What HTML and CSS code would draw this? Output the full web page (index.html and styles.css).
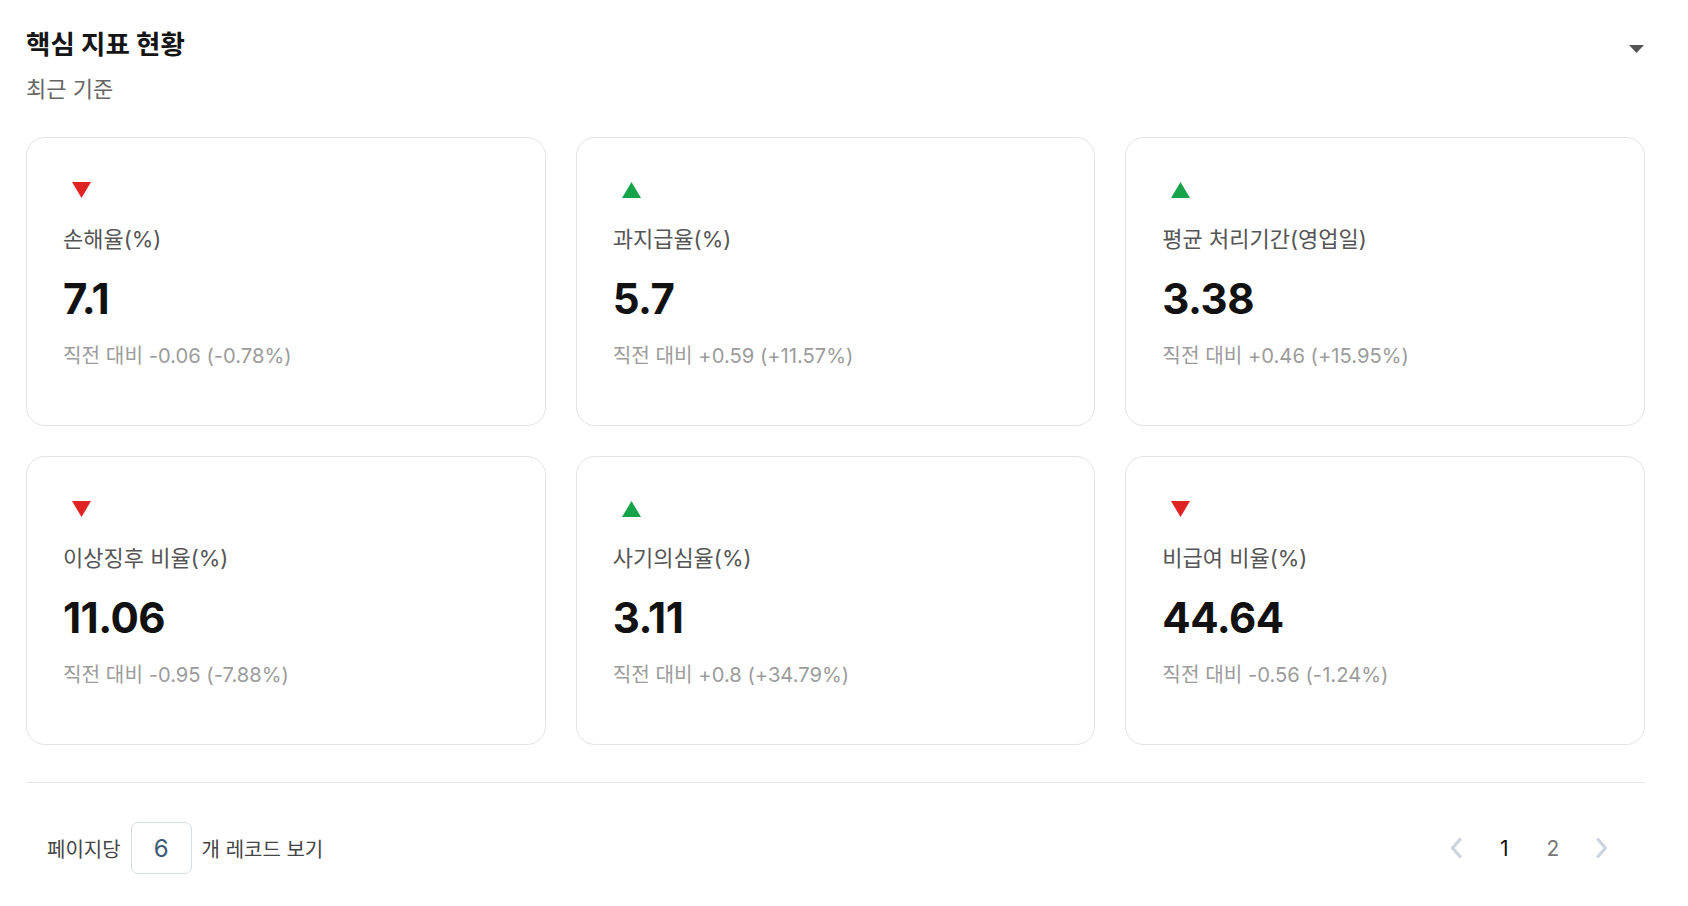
FILE: index.html
```html
<!DOCTYPE html>
<html lang="ko">
<head>
<meta charset="utf-8">
<title>핵심 지표 현황</title>
<link rel="stylesheet" href="styles.css">
</head>
<body>
<section class="panel">
  <div class="header">
    <div class="heading">
      <h1 class="title">핵심 지표 현황</h1>
      <p class="subtitle">최근 기준</p>
    </div>
    <svg class="caret" width="15" height="8" viewBox="0 0 15 8"><path d="M0 0 H15 L7.5 8 Z" fill="#555"/></svg>
  </div>

  <div class="cards">
    <div class="card">
      <div class="trend"><svg width="19" height="16" viewBox="0 0 19 16"><path d="M0 0 H19 L9.5 16 Z" fill="#e02424"/></svg></div>
      <div class="label">손해율(%)</div>
      <div class="value">7.1</div>
      <div class="delta">직전 대비 -0.06 (-0.78%)</div>
    </div>
    <div class="card">
      <div class="trend"><svg width="19" height="16" viewBox="0 0 19 16"><path d="M9.5 0 L19 16 H0 Z" fill="#16a34a"/></svg></div>
      <div class="label">과지급율(%)</div>
      <div class="value">5.7</div>
      <div class="delta">직전 대비 +0.59 (+11.57%)</div>
    </div>
    <div class="card">
      <div class="trend"><svg width="19" height="16" viewBox="0 0 19 16"><path d="M9.5 0 L19 16 H0 Z" fill="#16a34a"/></svg></div>
      <div class="label">평균 처리기간(영업일)</div>
      <div class="value">3.38</div>
      <div class="delta">직전 대비 +0.46 (+15.95%)</div>
    </div>
    <div class="card">
      <div class="trend"><svg width="19" height="16" viewBox="0 0 19 16"><path d="M0 0 H19 L9.5 16 Z" fill="#e02424"/></svg></div>
      <div class="label">이상징후 비율(%)</div>
      <div class="value">11.06</div>
      <div class="delta">직전 대비 -0.95 (-7.88%)</div>
    </div>
    <div class="card">
      <div class="trend"><svg width="19" height="16" viewBox="0 0 19 16"><path d="M9.5 0 L19 16 H0 Z" fill="#16a34a"/></svg></div>
      <div class="label">사기의심율(%)</div>
      <div class="value">3.11</div>
      <div class="delta">직전 대비 +0.8 (+34.79%)</div>
    </div>
    <div class="card">
      <div class="trend"><svg width="19" height="16" viewBox="0 0 19 16"><path d="M0 0 H19 L9.5 16 Z" fill="#e02424"/></svg></div>
      <div class="label">비급여 비율(%)</div>
      <div class="value">44.64</div>
      <div class="delta">직전 대비 -0.56 (-1.24%)</div>
    </div>
  </div>

  <div class="footer">
    <div class="per-page">
      <span>페이지당</span>
      <span class="page-size">6</span>
      <span>개 레코드 보기</span>
    </div>
    <nav class="pager">
      <span class="pg-item"><svg width="14" height="22" viewBox="0 0 14 22"><path d="M11 2.5 L3.5 11 L11 19.5" fill="none" stroke="#cdd3de" stroke-width="3.2" stroke-linecap="round" stroke-linejoin="round"/></svg></span>
      <span class="pg-item current">1</span>
      <span class="pg-item">2</span>
      <span class="pg-item"><svg width="14" height="22" viewBox="0 0 14 22"><path d="M3 2.5 L10.5 11 L3 19.5" fill="none" stroke="#cdd3de" stroke-width="3.2" stroke-linecap="round" stroke-linejoin="round"/></svg></span>
    </nav>
  </div>
</section>
</body>
</html>
```

FILE: styles.css
```css
* { box-sizing: border-box; }

html, body {
  margin: 0;
  padding: 0;
  background: #ffffff;
}

body {
  font-family: Inter, "Noto Sans CJK KR", sans-serif;
  color: #111;
}

.panel {
  padding: 27px 43px 0 26px;
}

.header {
  display: flex;
  justify-content: space-between;
  align-items: flex-start;
}

.title {
  margin: 0;
  font-size: 26.5px;
  line-height: 34px;
  font-weight: 700;
  color: #151515;
}

.subtitle {
  margin: 13px 0 0;
  font-size: 22px;
  line-height: 30px;
  color: #666;
}

.caret {
  margin-top: 18px;
  margin-right: 1px;
  display: block;
}

.cards {
  margin-top: 33px;
  display: grid;
  grid-template-columns: repeat(3, 1fr);
  grid-auto-rows: 289px;
  gap: 30px;
}

.card {
  border: 1px solid #e3e3e6;
  border-radius: 19px;
  padding: 44px 36px 0 36px;
  background: #fff;
}

.trend {
  height: 17px;
  padding-left: 9px;
}

.trend svg { display: block; }

.label {
  margin-top: 26px;
  font-size: 22px;
  line-height: 28px;
  color: #555;
}

.value {
  margin-top: 20px;
  font-size: 42px;
  line-height: 52px;
  font-weight: 700;
  letter-spacing: -0.5px;
  color: #111;
}

.delta {
  margin-top: 17px;
  font-size: 20.2px;
  line-height: 28px;
  color: #9c9c9c;
}

.footer {
  margin-top: 37px;
  border-top: 1px solid #e6e6e8;
  padding-top: 39px;
  display: flex;
  justify-content: space-between;
  align-items: center;
}

.per-page {
  display: flex;
  align-items: center;
  gap: 10px;
  padding-left: 21px;
  font-size: 20px;
  color: #444;
}

.page-size {
  width: 61px;
  height: 52px;
  border: 1px solid #d5dce6;
  border-radius: 7px;
  display: flex;
  align-items: center;
  justify-content: center;
  font-size: 24px;
  color: #3d5a73;
}

.pager {
  display: flex;
  align-items: center;
  padding-right: 19px;
}

.pg-item {
  width: 48.7px;
  height: 52px;
  display: flex;
  align-items: center;
  justify-content: center;
  font-size: 21px;
  color: #777;
}

.pg-item.current { color: #111; }
.pg-item svg { display: block; }
```
